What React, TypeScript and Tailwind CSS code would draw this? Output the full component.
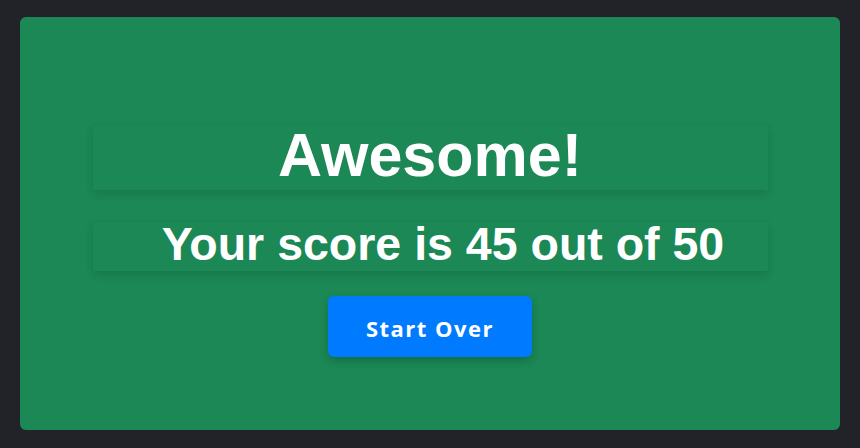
import React from 'react';

const App = () => {
  return (
    <div className="min-h-screen w-full bg-[#212329] px-5 pt-[17px] pb-[18px]">
      {/* Result card */}
      <div className="h-[413px] rounded-md bg-[#1b8856] flex flex-col items-center pt-[108px]">
        <div className="w-[675px] h-[65px] bg-[#1b8856] shadow-[0_4px_8px_rgba(0,0,0,0.12)] flex items-center justify-center">
          <h1 className="text-[61px] leading-none font-bold text-white -mt-1 font-['Liberation_Sans',Arial,sans-serif]">
            Awesome!
          </h1>
        </div>
        <div className="mt-8 w-[675px] h-[49px] bg-[#1b8856] shadow-[0_4px_8px_rgba(0,0,0,0.12)] flex items-center justify-center pl-[26px]">
          <h2 className="text-[46.5px] leading-none font-bold text-white -mt-1 font-['Liberation_Sans',Arial,sans-serif]">
            Your score is 45 out of 50
          </h2>
        </div>
        <button className="mt-[25px] w-[204px] h-[61px] pt-[3px] rounded-md bg-[#007bff] text-white text-[22px] font-bold tracking-[1.5px] shadow-[0_4px_8px_rgba(0,0,0,0.2)] font-['Open_Sans',sans-serif]">
          Start Over
        </button>
      </div>
    </div>
  );
};

export default App;
